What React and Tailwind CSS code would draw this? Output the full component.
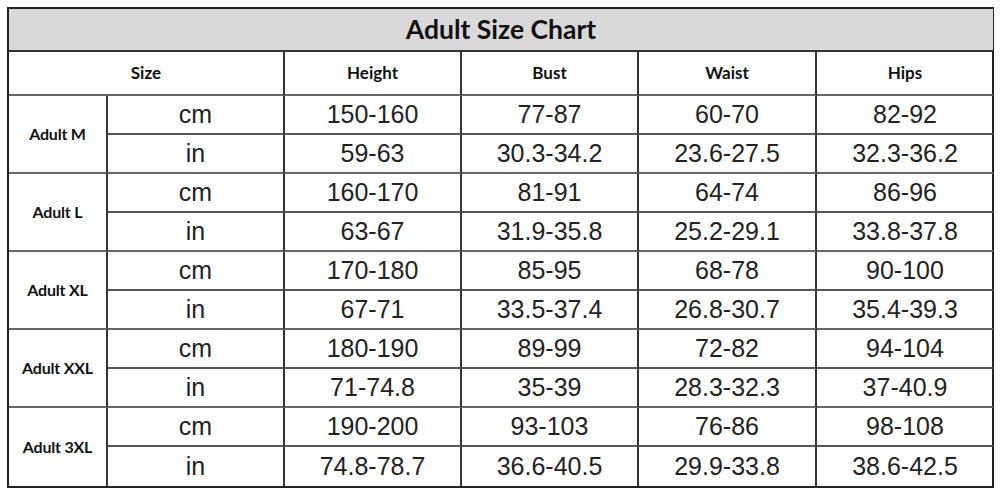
import React from "react";

const rows = [
  { size: "Adult M", cm: ["150-160", "77-87", "60-70", "82-92"], inch: ["59-63", "30.3-34.2", "23.6-27.5", "32.3-36.2"] },
  { size: "Adult L", cm: ["160-170", "81-91", "64-74", "86-96"], inch: ["63-67", "31.9-35.8", "25.2-29.1", "33.8-37.8"] },
  { size: "Adult XL", cm: ["170-180", "85-95", "68-78", "90-100"], inch: ["67-71", "33.5-37.4", "26.8-30.7", "35.4-39.3"] },
  { size: "Adult XXL", cm: ["180-190", "89-99", "72-82", "94-104"], inch: ["71-74.8", "35-39", "28.3-32.3", "37-40.9"] },
  { size: "Adult 3XL", cm: ["190-200", "93-103", "76-86", "98-108"], inch: ["74.8-78.7", "36.6-40.5", "29.9-33.8", "38.6-42.5"] },
];

const heads = ["Height", "Bust", "Waist", "Hips"];

const lato = { fontFamily: "Lato, 'Open Sans', sans-serif" };

export default function App() {
  return (
    <div className="w-[1000px] h-[491px] bg-white pl-[7px] pt-[7px]">
      <div className="w-[987px] border-2 border-[#222] bg-white">
        <div className="grid grid-cols-[99px_177px_177px_177px_178px_176px] grid-rows-[43px_44px_repeat(10,39px)]">
          {/* Title */}
          <div
            className="col-span-6 bg-[#d9d9d9] border-b-2 border-[#333] flex items-center justify-center text-[26.5px] font-bold text-[#111]"
            style={lato}
          >
            Adult Size Chart
          </div>

          {/* Header */}
          <div className="col-span-2 border-r-2 border-b-2 border-[#333] border-b-[#666] flex items-center justify-center text-[17px] font-bold text-[#111]" style={lato}>
            Size
          </div>
          {heads.map((h, i) => (
            <div
              key={h}
              className={`border-b-2 border-b-[#666] border-[#333] flex items-center justify-center text-[17px] font-bold text-[#111] ${i < 3 ? "border-r-2" : ""}`}
              style={lato}
            >
              {h}
            </div>
          ))}

          {rows.map((r, ri) => {
            const last = ri === rows.length - 1;
            return (
              <React.Fragment key={r.size}>
                <div
                  className={`row-span-2 border-r-2 border-[#333] border-b-[#666] flex items-center justify-center text-[16px] font-bold text-[#111] tracking-[-0.2px] ${last ? "" : "border-b-2"}`}
                  style={lato}
                >
                  {r.size}
                </div>
                <div className="border-r-2 border-b-2 border-[#333] border-b-[#555] flex items-center justify-center text-[25px] text-[#222] font-['Liberation_Sans',Arial,sans-serif]">
                  cm
                </div>
                {r.cm.map((v, i) => (
                  <div
                    key={"c" + i}
                    className={`border-b-2 border-[#333] border-b-[#555] flex items-center justify-center text-[25px] text-[#222] font-['Liberation_Sans',Arial,sans-serif] ${i < 3 ? "border-r-2" : ""}`}
                  >
                    {v}
                  </div>
                ))}
                <div className={`border-r-2 border-[#333] border-b-[#666] flex items-center justify-center text-[25px] text-[#222] font-['Liberation_Sans',Arial,sans-serif] ${last ? "" : "border-b-2"}`}>
                  in
                </div>
                {r.inch.map((v, i) => (
                  <div
                    key={"i" + i}
                    className={`border-[#333] border-b-[#666] flex items-center justify-center text-[25px] text-[#222] font-['Liberation_Sans',Arial,sans-serif] ${i < 3 ? "border-r-2" : ""} ${last ? "" : "border-b-2"}`}
                  >
                    {v}
                  </div>
                ))}
              </React.Fragment>
            );
          })}
        </div>
      </div>
    </div>
  );
}
